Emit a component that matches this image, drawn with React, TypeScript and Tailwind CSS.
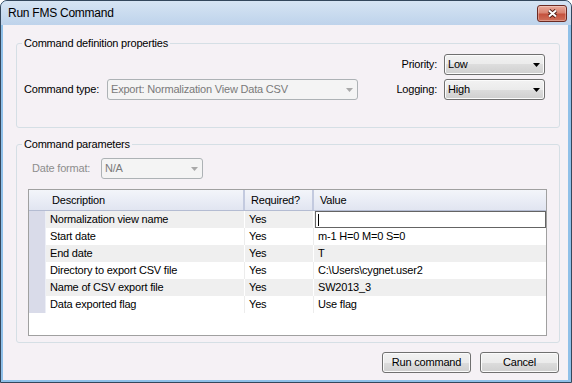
import { twMerge as tw } from 'tailwind-merge';

const rows = [
    ['Normalization view name', 'Yes', ''],
    ['Start date', 'Yes', 'm-1 H=0 M=0 S=0'],
    ['End date', 'Yes', 'T'],
    ['Directory to export CSV file', 'Yes', 'C:\\Users\\cygnet.user2'],
    ['Name of CSV export file', 'Yes', 'SW2013_3'],
    ['Data exported flag', 'Yes', 'Use flag'],
];

const face =
    'bg-[linear-gradient(#f2f2f2,#ebebeb_50%,#dddddd_50%,#cfcfcf)] shadow-[inset_0_0_0_1px_#fbfbfb] border-[#707070]';

const Arrow = ({ className }: { className?: string }) => (
    <svg width="7" height="4" viewBox="0 0 7 4" className={className}>
        <path d="M0 0H7L3.5 4Z" fill="currentColor" />
    </svg>
);

const Combo = ({ value, className, disabled }: { value: string; className: string; disabled?: boolean }) => (
    <div
        className={tw(
            'flex h-[21px] items-center justify-between rounded-[3px] border pl-[3px] pr-[4px]',
            disabled ? 'border-[#adb2b5] bg-[#f4f4f4] text-[#7a7a7a]' : tw(face, 'text-black'),
            className
        )}
    >
        <span>{value}</span>
        <Arrow className={disabled ? 'text-[#a9a9a9]' : 'text-black'} />
    </div>
);

const Button = ({ label, className }: { label: string; className: string }) => (
    <button className={tw('h-[21px] rounded-[3px] border text-black', face, className)}>{label}</button>
);

const Grid = () => (
    <div className="ml-[11px] mr-[12px] mt-[10px] flex h-[147px] flex-col border border-[#a0a0a0] bg-white">
        <div className="flex h-[21px] border-b border-[#b4bcd2] bg-[linear-gradient(#f3f5fa,#e1e5f1)]">
            <div className="w-[17px]" />
            <div className="flex w-[199px] items-center border-r-2 border-[#c3cadf] pl-[6px]">Description</div>
            <div className="flex w-[69px] items-center border-r-2 border-[#c3cadf] pl-[6px]">Required?</div>
            <div className="flex flex-1 items-center pl-[6px]">Value</div>
        </div>
        {rows.map(([desc, req, val], i) => {
            const odd = i % 2 === 0;
            const line = odd ? 'border-white' : 'border-[#ececec]';
            return (
                <div key={desc} className={tw('flex h-[17px]', odd ? 'bg-[#efefef]' : 'bg-white')}>
                    <div className="w-[17px] border-r border-[#eceef6] bg-[#d9dbe9]" />
                    <div className={tw('flex w-[199px] items-center border-r pl-[4px]', line)}>{desc}</div>
                    <div className={tw('flex w-[69px] items-center border-r pl-[4px]', line)}>{req}</div>
                    <div className="flex flex-1 items-center pl-[4px]">
                        {i === 0 ? (
                            <div className="-ml-[3px] flex h-[17px] flex-1 items-center border border-[#646464] bg-white pl-[2px]">
                                <div className="h-[12px] w-px bg-black" />
                            </div>
                        ) : (
                            val
                        )}
                    </div>
                </div>
            );
        })}
    </div>
);

export default function App() {
    return (
        <div className="h-[383px] w-[572px] font-['Liberation_Sans',Arial,sans-serif] text-[11px] tracking-[-0.2px] text-black">
            <div className="flex h-full flex-col rounded-t-[7px] border border-[#34475c] bg-[#8fc0e8]">
                <div className="flex h-[24px] items-center justify-between rounded-t-[6px] bg-[linear-gradient(#d6e4f3,#bed3eb)] pl-[7px]">
                    <span className="text-[12px] tracking-[-0.25px]">Run FMS Command</span>
                    <div className="mr-[4px] flex h-[17px] w-[30px] items-center justify-center rounded-[3px] border border-[#6b2a22] bg-[linear-gradient(#eaa99a,#d98472_45%,#c5523e_55%,#d0705a)] shadow-[inset_0_0_0_1px_rgba(255,255,255,0.3)]">
                        <svg width="11" height="9" viewBox="0 0 11 9">
                            <path d="M2 1.5L9 7.5M9 1.5L2 7.5" stroke="#4a1a14" strokeWidth="3.8" />
                            <path d="M2 1.5L9 7.5M9 1.5L2 7.5" stroke="#ffffff" strokeWidth="2.1" />
                        </svg>
                    </div>
                </div>
                <div className="mb-[2px] ml-[2px] mr-[3px] flex flex-1 flex-col bg-[#f5f1f5] pb-[7px] pl-[13px] pr-[8px] pt-[11px]">
                    <fieldset className="rounded-[3px] border border-[#d5dfe5] p-0">
                        <legend className="ml-[5px] px-[2px] leading-[14px]">Command definition properties</legend>
                        <div className="flex flex-col gap-[4px] pb-[27px] pl-[7px] pr-[14px] pt-[4px]">
                            <div className="flex items-center justify-end gap-[7px]">
                                <span>Priority:</span>
                                <Combo value="Low" className="w-[101px]" />
                            </div>
                            <div className="flex items-center">
                                <span className="w-[83px]">Command type:</span>
                                <Combo value="Export: Normalization View Data CSV" className="w-[251px]" disabled />
                                <span className="ml-auto mr-[7px]">Logging:</span>
                                <Combo value="High" className="w-[101px]" />
                            </div>
                        </div>
                    </fieldset>
                    <fieldset className="mt-[9px] rounded-[3px] border border-[#d5dfe5] p-0 pb-[6px]">
                        <legend className="ml-[5px] px-[2px] leading-[14px]">Command parameters</legend>
                        <div className="flex items-center pl-[15px] pt-[7px]">
                            <span className="w-[69px] text-[#8d8d8d]">Date format:</span>
                            <Combo value="N/A" className="w-[102px]" disabled />
                        </div>
                        <Grid />
                    </fieldset>
                    <div className="mt-auto flex justify-end gap-[9px] pr-[1px]">
                        <Button label="Run command" className="w-[89px]" />
                        <Button label="Cancel" className="w-[79px]" />
                    </div>
                </div>
            </div>
        </div>
    );
}
